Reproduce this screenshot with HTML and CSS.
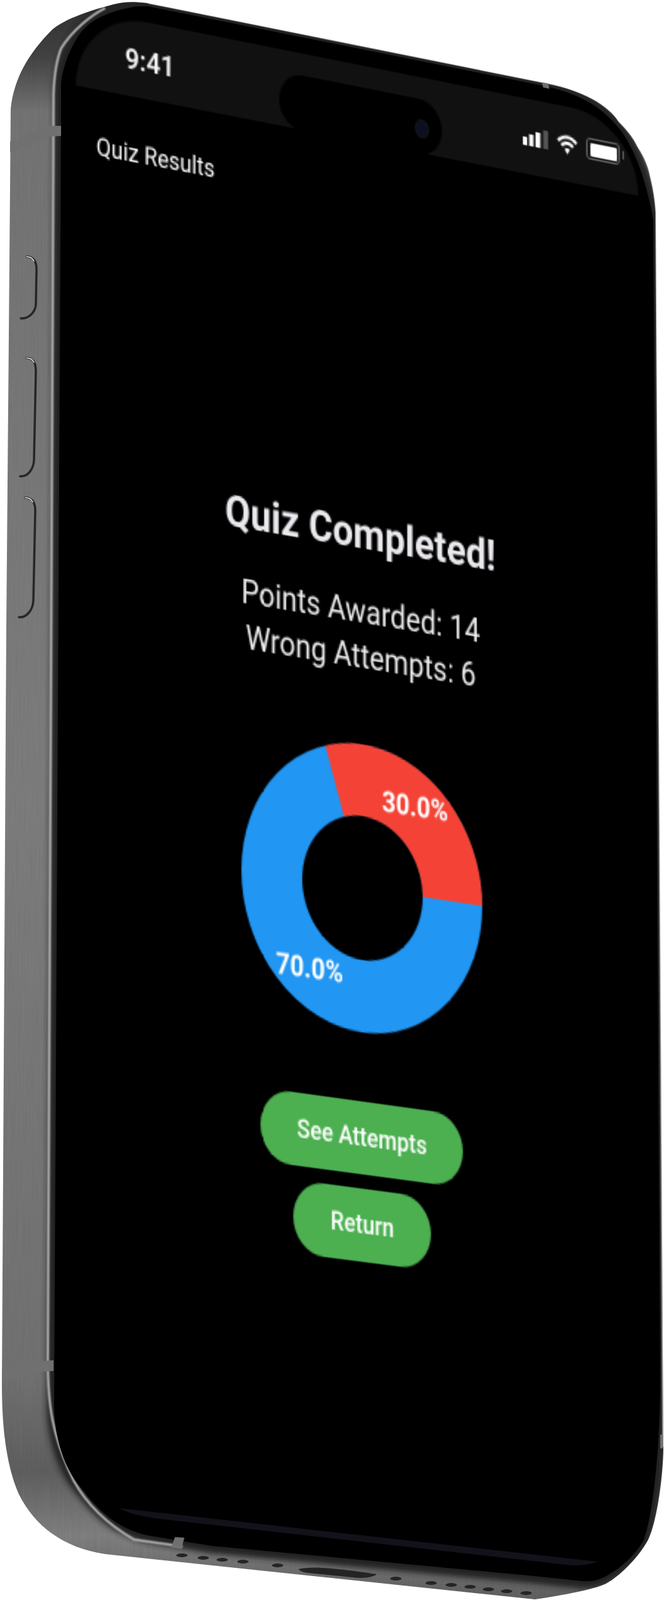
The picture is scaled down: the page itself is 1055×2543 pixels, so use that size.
FILE: index.html
```html
<!DOCTYPE html>
<html lang="en">
<head>
    <meta charset="UTF-8">
    <meta name="viewport" content="width=device-width, initial-scale=1.0">
    <title>Quiz Results</title>
    <link rel="stylesheet" href="styles.css">
</head>
<body>

    <div class="stage">
        <!-- phone body, drawn in page pixels -->
        <svg class="phone" viewBox="0 0 1055 2543" width="1055" height="2543">
            <defs>
                <linearGradient id="metal" gradientUnits="userSpaceOnUse" x1="0" y1="0" x2="0" y2="2543">
                    <stop offset="0" stop-color="#2c2c2c"/>
                    <stop offset="0.035" stop-color="#3f3f3f"/>
                    <stop offset="0.07" stop-color="#6e6e6e"/>
                    <stop offset="0.5" stop-color="#777"/>
                    <stop offset="0.86" stop-color="#6c6c6c"/>
                    <stop offset="0.92" stop-color="#5a5a5a"/>
                    <stop offset="0.96" stop-color="#7a7a7a"/>
                    <stop offset="1" stop-color="#5a5a5a"/>
                </linearGradient>
                <clipPath id="bodyClip">
                    <path d="M16 300 L17 173 C22 125 45 85 83 47 C100 33 130 20 180 7 C195 3 210 2 235 5 L857 130 C890 136 915 143 943 158 C960 168 975 180 983 193 C1000 210 1008 222 1013 233 C1025 252 1030 265 1033 280 C1038 300 1041 320 1042 337 L1054 2300 C1054 2340 1045 2415 1030 2447 C1015 2475 985 2505 963 2517 C945 2525 915 2532 850 2542 L167 2470 C100 2460 55 2425 30 2375 C15 2340 3 2290 3 2200 L10 1000 Z"/>
                </clipPath>
                <filter id="soft" x="-10%" y="-10%" width="120%" height="120%">
                    <feGaussianBlur stdDeviation="1.2"/>
                </filter>
                <filter id="softer" x="-10%" y="-10%" width="120%" height="120%">
                    <feGaussianBlur stdDeviation="5"/>
                </filter>
                <filter id="brushed" x="0" y="0" width="100%" height="100%">
                    <feTurbulence type="fractalNoise" baseFrequency="0.5 0.012" numOctaves="2" seed="4"/>
                    <feColorMatrix type="saturate" values="0"/>
                </filter>
            </defs>

            <g clip-path="url(#bodyClip)">
                <rect width="1055" height="2543" fill="url(#metal)"/>
                <rect class="brush" width="1055" height="2543" filter="url(#brushed)"/>
                <path class="bevel" filter="url(#softer)" d="M97 200 L97 133 C100 100 120 55 140 40 C150 30 175 18 207 12 C215 10 225 10 235 10 L857 135 C890 142 915 150 940 165 C960 178 972 190 980 200 C1000 222 1024 270 1038 350 L1049 2200 C1049 2280 1040 2400 1023 2447 C1008 2475 980 2497 957 2508 C945 2513 935 2514 925 2513 L850 2505 L336 2457 L233 2440 C190 2430 160 2405 133 2370 C105 2340 86 2290 86 2233 Z"/>
                <path class="shine" filter="url(#soft)" d="M167 13 C145 24 115 48 97 77 C90 95 86 120 85 150 L84 400 L76 2150 C75 2233 83 2283 117 2353 C140 2395 175 2425 213 2447 L290 2458"/>
                <path class="rim" d="M235 5 L857 130 C890 136 915 143 943 158 C960 168 975 180 983 193 C1000 210 1008 222 1013 233 C1025 252 1030 265 1033 280 C1038 300 1041 320 1042 337 L1053 2300"/>
            </g>
            <path class="glass" d="M97 200 L97 133 C100 100 120 55 140 40 C150 30 175 18 207 12 C215 10 225 10 235 10 L857 135 C890 142 915 150 940 165 C960 178 972 190 980 200 C1000 222 1024 270 1038 350 L1049 2200 C1049 2280 1040 2400 1023 2447 C1008 2475 980 2497 957 2508 C945 2513 935 2514 925 2513 L850 2505 L336 2457 L233 2440 C190 2430 160 2405 133 2370 C105 2340 86 2290 86 2233 Z"/>

            <!-- antenna bands -->
            <path class="band" d="M16 225 L80 200 L97 200 L97 216 L80 217 L16 242 Z"/>
            <path class="band" d="M3 2178 L67 2163 L85 2162 L85 2179 L67 2180 L3 2196 Z"/>
            <path class="band" d="M278 2443 L293 2444 L288 2462 L272 2460 Z"/>
            <path class="band" d="M861 131 L871 133 L873 141 L863 139 Z"/>
            <rect class="band" x="1049" y="2280" width="4" height="22"/>

            <!-- side buttons -->
            <path class="side-btn" d="M42 408 C52 408 58 414 58 428 L57 484 C56 497 45 507 33 506"/>
            <path class="side-btn" d="M42 569 C52 569 57 575 57 590 L54 732 C53 746 44 758 32 757"/>
            <path class="side-btn" d="M40 791 C50 791 56 797 56 812 L53 955 C52 970 42 982 30 981"/>
            <path class="side-glint" d="M42 408 C48 408 52 410 54 415"/>
            <path class="side-glint" d="M42 569 C48 569 52 571 54 576"/>
            <path class="side-glint" d="M40 791 C46 791 50 793 52 798"/>

            <!-- bottom edge -->
            <path class="home-strip" d="M188 2397 L949 2482 C935 2488 915 2489 900 2487 L262 2415 C235 2412 210 2408 188 2397 Z"/>
            <g class="holes">
                <ellipse cx="289" cy="2472" rx="9" ry="3"/>
                <ellipse cx="323" cy="2476" rx="9" ry="3"/>
                <ellipse cx="353" cy="2479" rx="9" ry="3"/>
                <ellipse cx="386" cy="2482" rx="9" ry="3"/>
                <ellipse cx="441" cy="2488" rx="9" ry="3"/>
                <path d="M474 2494 C500 2489 530 2492 599 2502 C590 2508 575 2509 560 2507 L500 2501 C485 2500 478 2498 474 2494 Z"/>
                <ellipse cx="629" cy="2509" rx="9" ry="3"/>
                <ellipse cx="685" cy="2516" rx="9" ry="3"/>
                <ellipse cx="717" cy="2519" rx="9" ry="3"/>
                <ellipse cx="747" cy="2522" rx="9" ry="3"/>
                <ellipse cx="776" cy="2526" rx="9" ry="3"/>
                <ellipse cx="805" cy="2529" rx="9" ry="3"/>
                <ellipse cx="836" cy="2532" rx="9" ry="3"/>
            </g>
        </svg>

        <!-- the app, laid out flat at 390x844 and tilted onto the glass -->
        <div class="screen">
            <div class="status-bar">
                <span class="time">9:41</span>
                <div class="island"><span class="lens"></span></div>
                <div class="status-icons">
                    <svg width="18" height="11" viewBox="0 0 18 11">
                        <rect x="0" y="6" width="3" height="5" fill="#fff"/>
                        <rect x="4.5" y="4" width="3" height="7" fill="#fff"/>
                        <rect x="9" y="2" width="3.4" height="9" fill="#fff"/>
                        <rect x="14.5" y="0" width="3.4" height="11" fill="#555"/>
                    </svg>
                    <svg width="15" height="12" viewBox="0 0 15 12">
                        <path d="M1 4.4 C4.5 .4 10.5 .4 14 4.4" fill="none" stroke="#fff" stroke-width="2"/>
                        <path d="M3.4 6.8 C5.6 4.4 9.4 4.4 11.6 6.8" fill="none" stroke="#fff" stroke-width="2"/>
                        <path d="M5.6 8.8 C6.6 7.8 8.4 7.8 9.4 8.8 L7.5 11.6 Z" fill="#fff"/>
                    </svg>
                    <div class="battery"><span class="battery-level"></span></div>
                </div>
            </div>

            <header class="app-bar">Quiz Results</header>

            <main class="results">
                <h1 class="title">Quiz Completed!</h1>
                <p class="score">Points Awarded: 14</p>
                <p class="score">Wrong Attempts: 6</p>

                <svg class="chart" width="164" height="164" viewBox="0 0 164 164">
                    <circle cx="82" cy="82" r="61.5" fill="none" stroke="#2196f3" stroke-width="41"/>
                    <circle cx="82" cy="82" r="61.5" fill="none" stroke="#f44336" stroke-width="41"
                            stroke-dasharray="115.92 386.42" transform="rotate(-108 82 82)"/>
                    <text class="chart-label" x="118" y="36.5">30.0%</text>
                    <text class="chart-label" x="46" y="137.5">70.0%</text>
                </svg>

                <div class="actions">
                    <button class="btn">See Attempts</button>
                    <button class="btn">Return</button>
                </div>
            </main>
        </div>
    </div>

</body>
</html>
```

FILE: styles.css
```css
body{
    margin: 0;
    background-color: #fff;
}
.stage{
    position: relative;
    width: 1055px;
    height: 2543px;
    overflow: hidden;
}
.phone{
    position: absolute;
    top: 0;
    left: 0;
}
.brush{
    opacity: 0.12;
    mix-blend-mode: overlay;
}
.bevel{
    fill: none;
    stroke: #202020;
    stroke-width: 24;
}
.shine{
    fill: none;
    stroke: #a8a8a8;
    stroke-width: 4;
}
.rim{
    fill: none;
    stroke: #8a8a8a;
    stroke-width: 2;
}
.glass{
    fill: #000;
}
.band{
    fill: #707070;
}
.side-btn{
    fill: none;
    stroke: #262626;
    stroke-width: 3.5;
    stroke-linecap: round;
}
.side-glint{
    fill: none;
    stroke: #e4e4e4;
    stroke-width: 1.5;
    stroke-linecap: round;
}
.home-strip{
    fill: #14111a;
}
.holes{
    fill: #242424;
}

.screen{
    position: absolute;
    top: 0;
    left: 0;
    width: 390px;
    height: 844px;
    transform-origin: 0 0;
    transform: matrix3d(2.37692,0.47598,0,0.0000886, -0.0212,2.72132,0,-0.00004311, 0,0,1,0, 121,13,0,1);
    font-family: Roboto, "Liberation Sans", sans-serif;
    color: #fff;
    filter: blur(0.35px);
}

.status-bar{
    position: relative;
    display: flex;
    align-items: center;
    justify-content: space-between;
    box-sizing: border-box;
    height: 45px;
    padding: 0 13px 0 33px;
    background-color: #111;
    border-radius: 48px 48px 0 0 / 45px 45px 0 0;
}
.time{
    font-size: 17px;
    font-weight: 600;
    color: #f4f4f4;
}
.island{
    position: absolute;
    top: 13px;
    left: 138px;
    display: flex;
    align-items: center;
    justify-content: flex-end;
    box-sizing: border-box;
    width: 113px;
    height: 33px;
    padding: 2px 9px 0 0;
    background-color: #000;
    border-radius: 17px;
}
.lens{
    width: 8px;
    height: 9px;
    background-color: #0b0f22;
    border: 1px solid #161616;
    border-radius: 50%;
}
.status-icons{
    display: flex;
    align-items: center;
    gap: 6px;
}
.battery{
    position: relative;
    box-sizing: border-box;
    width: 24px;
    height: 13px;
    padding: 1.5px;
    border: 1px solid #666;
    border-radius: 3px;
}
.battery::after{
    content: "";
    position: absolute;
    top: 3px;
    right: -4px;
    width: 1.5px;
    height: 5px;
    background-color: #666;
}
.battery-level{
    display: block;
    height: 100%;
    background-color: #fff;
    border-radius: 1px;
}

.app-bar{
    padding: 26px 14px 0;
    font-size: 14.5px;
    line-height: 16px;
}

.results{
    display: flex;
    flex-direction: column;
    align-items: center;
    padding: 174px 1px 0 0;
}
.title{
    margin: 0 0 18px;
    font-size: 25px;
    font-weight: 700;
    line-height: 28px;
    color: #ebe9ed;
}
.score{
    margin: 0;
    font-size: 19px;
    line-height: 26px;
    color: #eee;
}
.chart{
    margin-top: 37px;
}
.chart-label{
    font-size: 16.5px;
    font-weight: 700;
    fill: #fff;
    text-anchor: middle;
}
.actions{
    display: flex;
    flex-direction: column;
    align-items: center;
    gap: 8px;
    margin-top: 39px;
}
.btn{
    height: 41px;
    padding: 0 25px;
    background-color: #4caf50;
    border: none;
    border-radius: 21px;
    font-family: inherit;
    font-size: 14.5px;
    font-weight: 500;
    color: #fff;
}
```
